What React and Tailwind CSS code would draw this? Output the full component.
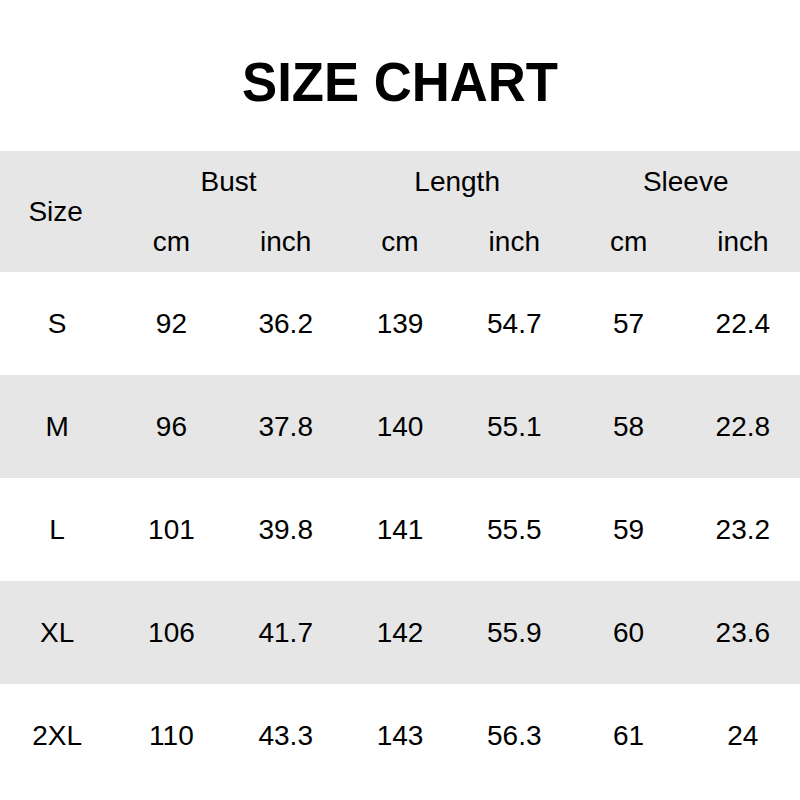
const rows = [
  ['S', '92', '36.2', '139', '54.7', '57', '22.4'],
  ['M', '96', '37.8', '140', '55.1', '58', '22.8'],
  ['L', '101', '39.8', '141', '55.5', '59', '23.2'],
  ['XL', '106', '41.7', '142', '55.9', '60', '23.6'],
  ['2XL', '110', '43.3', '143', '56.3', '61', '24'],
];

const App = () => {
  return (
    <div className="w-[800px] h-[800px] bg-white text-black font-['Liberation_Sans',Arial,sans-serif] overflow-hidden">
      {/* Title */}
      <div className="h-[151px] flex items-center justify-center pt-[12px]">
        <h1 className="text-[56px] font-bold leading-none scale-x-[0.94]">SIZE CHART</h1>
      </div>

      {/* Header band */}
      <div className="grid grid-cols-7 grid-rows-[61px_60px] bg-[#e6e6e6] text-[28px]">
        <div className="row-span-2 flex items-center justify-center pr-[3px]">Size</div>
        <div className="col-span-2 flex items-center justify-center">Bust</div>
        <div className="col-span-2 flex items-center justify-center">Length</div>
        <div className="col-span-2 flex items-center justify-center">Sleeve</div>
        {['cm', 'inch', 'cm', 'inch', 'cm', 'inch'].map((u, i) => (
          <div key={i} className="flex items-center justify-center">{u}</div>
        ))}
      </div>

      {/* Rows */}
      {rows.map((r, i) => (
        <div
          key={r[0]}
          className={`grid grid-cols-7 h-[103px] text-[28px] ${i % 2 === 1 ? 'bg-[#e6e6e6]' : 'bg-white'}`}
        >
          {r.map((v, j) => (
            <div key={j} className="flex items-center justify-center">{v}</div>
          ))}
        </div>
      ))}
    </div>
  );
};

export default App;
